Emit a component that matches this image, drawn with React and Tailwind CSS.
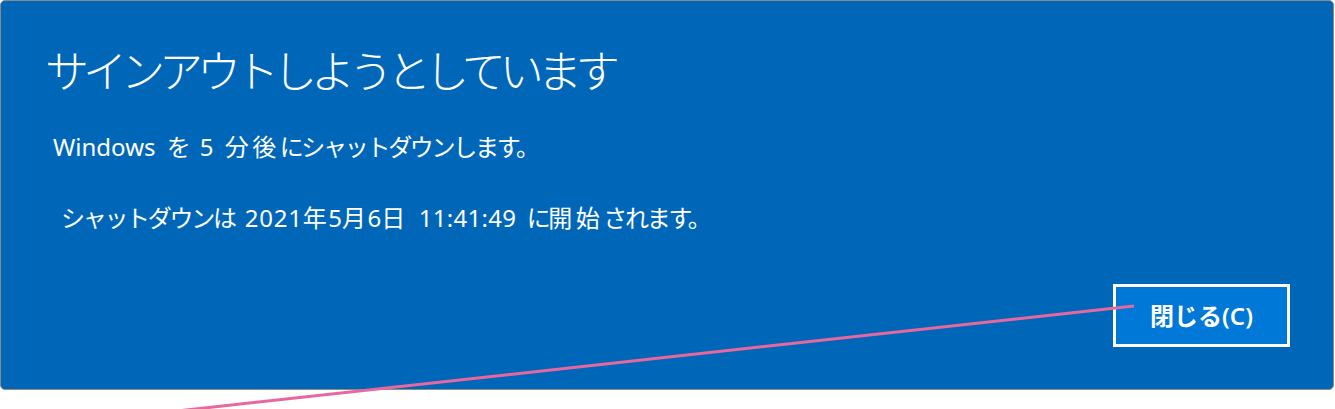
import React from 'react'

const font = { fontFamily: '"Noto Sans", "Noto Sans CJK JP", sans-serif' }

// kana run in a narrower pitch, kanji run wider
const K = ({ children }) => <span className="tracking-[-2.3px]">{children}</span>
const H = ({ children }) => <span className="tracking-[3.5px]">{children}</span>

export default function App() {
  return (
    <div className="relative w-[1335px] h-[409px] bg-white overflow-hidden" style={font}>
      {/* Dialog */}
      <div className="w-[1334px] h-[390px] bg-[#0067b8] border border-[#8a8a8a] rounded-[5px] text-white flex flex-col">
        <h1 className="ml-[44px] mt-[45px] text-[44px] leading-[50px] font-light tracking-[-6px] whitespace-nowrap">
          サインアウトしようとしています
        </h1>
        <p className="ml-[52px] mt-[37px] text-[24px] leading-[28px] [word-spacing:5px] whitespace-nowrap">
          Windows <K>を</K> 5 <H>分後</H><K>にシャットダウンします。</K>
        </p>
        <p className="ml-[60px] mt-[43px] text-[24px] leading-[28px] whitespace-nowrap">
          <K>シャットダウンは</K>
          <span className="ml-[3px] tracking-[0.8px]">&nbsp;2021</span>
          <span className="tracking-[1.5px]">年</span>5<span className="tracking-[1.5px]">月</span>6<span className="tracking-[1.5px]">日</span>
          <span className="ml-[12px] tracking-[0.3px]">11:41:49</span>
          <span className="ml-[4px]">&nbsp;</span><K>に</K><H>開始</H><K>されます。</K>
        </p>
        <div className="flex justify-end mt-[52px] mr-[43px]">
          <button className="w-[177px] h-[63px] border-[3px] border-white bg-[#0078d7] text-white text-[24px] font-semibold flex items-center justify-center">
            閉じる(C)
          </button>
        </div>
      </div>

      {/* Annotation line */}
      <svg className="absolute inset-0 pointer-events-none" width="1335" height="409">
        <line x1="168" y1="412" x2="1134" y2="306" stroke="#e8679f" strokeWidth="3" />
      </svg>
    </div>
  )
}
